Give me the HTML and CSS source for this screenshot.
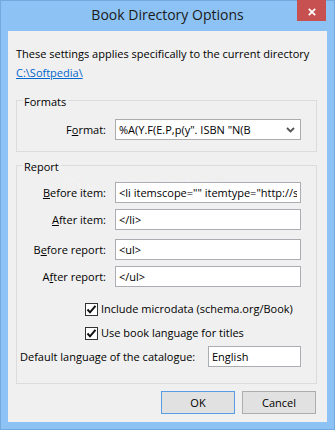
FILE: index.html
```html
<!doctype html>
<html lang="en">
<head>
  <meta charset="UTF-8">
  <meta name="viewport" content="width=device-width, initial-scale=1.0">
  <title>Book Directory Options</title>
  <link rel="stylesheet" href="styles.css">
</head>
<body>
<div class="window">
  <div class="titlebar">
    <span class="spacer"></span>
    <h1 class="title">Book Directory Options</h1>
    <button class="close">
      <svg width="8" height="8" viewBox="0 0 8 8">
        <path d="M0.8 0.8 L7.2 7.2 M7.2 0.8 L0.8 7.2" stroke="#fff" stroke-width="1.8" fill="none"/>
      </svg>
    </button>
  </div>
  <div class="client">
    <p class="intro">These settings applies specifically to the current directory</p>
    <a class="path" href="#">C:\Softpedia\</a>

    <fieldset class="group formats">
      <legend>Formats</legend>
      <div class="field">
        <label>F<u>o</u>rmat:</label>
        <div class="combo">
          <span>%A(Y.F(E.P,p(y". ISBN "N(B</span>
          <svg width="9" height="6" viewBox="0 0 9 6">
            <path d="M1 1 L4.5 4.5 L8 1" stroke="#555" stroke-width="1.8" fill="none"/>
          </svg>
        </div>
      </div>
    </fieldset>

    <fieldset class="group report">
      <legend>Report</legend>
      <div class="field rows">
        <span class="watermark">SOFTPEDIA<sup>®</sup></span>
        <label><u>B</u>efore item:</label>
        <input type="text" value='<li itemscope="" itemtype="http://schema.org/Book">'>
        <label><u>A</u>fter item:</label>
        <input type="text" value="</li>">
      </div>
      <div class="field rows second">
        <label>B<u>e</u>fore report:</label>
        <input type="text" value="<ul>">
        <label>A<u>f</u>ter report:</label>
        <input type="text" value="</ul>">
      </div>

      <div class="checks">
        <label class="check">
          <span class="box">
            <svg width="11" height="11" viewBox="0 0 11 11">
              <path d="M1.5 5.5 L4 8.3 L9.5 1.8" stroke="#111" stroke-width="2" fill="none"/>
            </svg>
          </span>
          Include microdata (schema.org/Book)
        </label>
        <label class="check">
          <span class="box">
            <svg width="11" height="11" viewBox="0 0 11 11">
              <path d="M1.5 5.5 L4 8.3 L9.5 1.8" stroke="#111" stroke-width="2" fill="none"/>
            </svg>
          </span>
          Use book language for titles
        </label>
      </div>

      <div class="lang">
        <label>Default language of the catalogue:</label>
        <input type="text" value="English">
      </div>
    </fieldset>

    <div class="buttons">
      <button class="btn default">OK</button>
      <button class="btn">Cancel</button>
    </div>
  </div>
</div>
</body>
</html>
```

FILE: styles.css
```css
* {
  margin: 0;
  padding: 0;
  box-sizing: border-box;
}

body {
  font-family: "Open Sans", "Noto Sans", sans-serif;
  font-size: 11px;
  color: #000;
  background: #fff;
}

.window {
  width: 335px;
  height: 430px;
  display: flex;
  flex-direction: column;
  background: #8dc3f4;
  border: 1px solid #74a9dd;
}

.titlebar {
  height: 30px;
  flex-shrink: 0;
  display: flex;
  align-items: flex-start;
}

.titlebar .spacer {
  width: 37px;
}

.title {
  flex: 1;
  text-align: center;
  font-size: 14px;
  font-weight: 400;
  line-height: 28px;
  color: #1a1a1a;
}

.close {
  width: 29px;
  height: 21px;
  margin: -1px 8px 0 0;
  padding-top: 3px;
  border: 0;
  background: #c75050;
  display: flex;
  align-items: center;
  justify-content: center;
}

.client {
  flex: 1;
  margin: 0 7px 7px;
  padding: 15px 10px 0 8px;
  background: #f0f0f0;
  display: flex;
  flex-direction: column;
}

.intro {
  line-height: 15px;
}

.path {
  align-self: flex-start;
  margin-top: 4px;
  line-height: 15px;
  color: #0066cc;
}

.group {
  margin-top: 11px;
  min-width: 0;
  border: 1px solid #dcdcdc;
}

.group legend {
  margin-left: 6px;
  padding: 4px 2px 0 1px;
  line-height: 14px;
}

.report {
  margin-top: 4px;
}

.field {
  display: grid;
  grid-template-columns: 89px 186px;
  column-gap: 9px;
  row-gap: 6px;
  align-items: center;
}

.field label {
  position: relative;
  text-align: right;
}

.formats .field {
  margin: 10px 0 11px;
}

.combo,
input[type="text"] {
  height: 21px;
  background: #fff;
  font: inherit;
  color: #000;
}

.combo {
  display: flex;
  align-items: center;
  justify-content: space-between;
  padding: 0 5px 0 3px;
  border: 1px solid #acacac;
  white-space: nowrap;
  overflow: hidden;
}

input[type="text"] {
  position: relative;
  width: 100%;
  padding: 0 3px;
  border: 1px solid #abadb3;
  outline: none;
}

.rows {
  position: relative;
  margin-top: 8px;
}

.rows.second {
  margin-top: 9px;
}

/* faint site watermark, painted under the labels */
.watermark {
  position: absolute;
  left: 23px;
  top: -10px;
  font-family: "Liberation Sans", sans-serif;
  font-size: 29px;
  font-weight: 700;
  letter-spacing: 1px;
  color: rgba(255, 255, 255, 0.55);
  text-shadow: 0 0 1px rgba(0, 0, 0, 0.06);
  pointer-events: none;
}

.watermark sup {
  font-size: 10px;
  vertical-align: 14px;
}

.checks {
  margin-top: 14px;
  padding-left: 68px;
  display: flex;
  flex-direction: column;
  gap: 8px;
}

.check {
  display: flex;
  align-items: center;
  gap: 3px;
  line-height: 16px;
}

.check .box {
  width: 13px;
  height: 13px;
  border: 1px solid #333;
  background: #fff;
  display: flex;
  align-items: center;
  justify-content: center;
}

.lang {
  margin: 5px 0 16px;
  padding-left: 3px;
  display: grid;
  grid-template-columns: 188px 93px;
  align-items: center;
}

.buttons {
  margin: 7px 1px 0 0;
  display: flex;
  justify-content: flex-end;
  gap: 7px;
}

.btn {
  width: 74px;
  height: 23px;
  font: inherit;
  color: #000;
  background: #e1e1e1;
  border: 1px solid #adadad;
}

.btn.default {
  border-color: #569de5;
}
```
